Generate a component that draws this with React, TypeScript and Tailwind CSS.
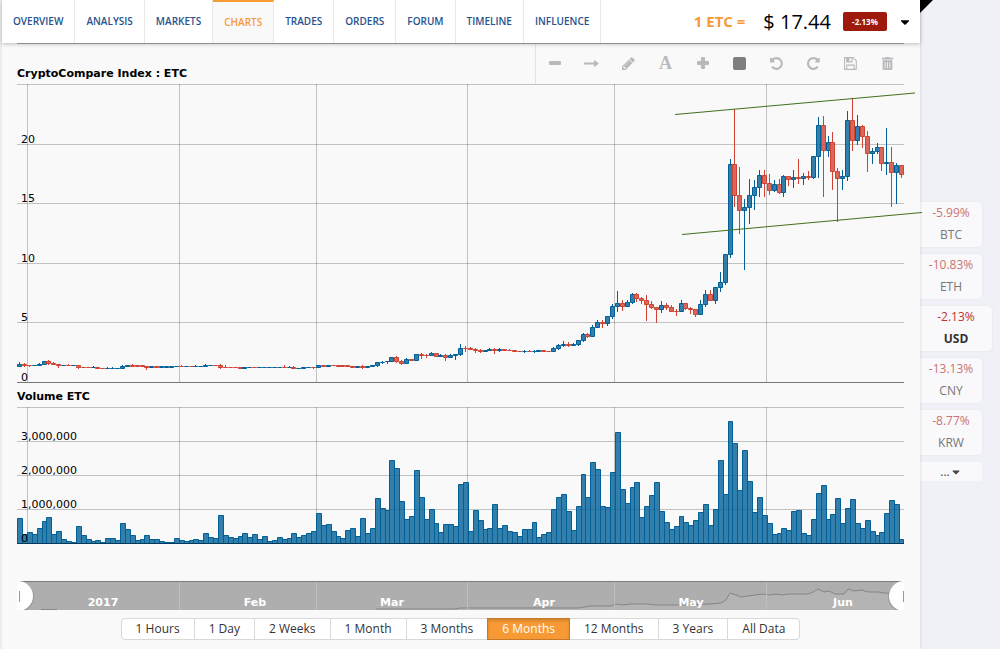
import { ReactNode } from "react";
import { FaCaretDown, FaTrashAlt } from "react-icons/fa";
import clsx from "clsx";

const tabs = [
  "Overview",
  "Analysis",
  "Markets",
  "Charts",
  "Trades",
  "Orders",
  "Forum",
  "Timeline",
  "Influence",
];

const ranges = [
  "1 Hours",
  "1 Day",
  "2 Weeks",
  "1 Month",
  "3 Months",
  "6 Months",
  "12 Months",
  "3 Years",
  "All Data",
];

const currencies = [
  { code: "BTC", change: "-5.99%" },
  { code: "ETH", change: "-10.83%" },
  { code: "USD", change: "-2.13%" },
  { code: "CNY", change: "-13.13%" },
  { code: "KRW", change: "-8.77%" },
];

const months = [
  { label: "2017", x: 27, center: 103 },
  { label: "Feb", x: 179, center: 255 },
  { label: "Mar", x: 316, center: 392 },
  { label: "Apr", x: 467, center: 544 },
  { label: "May", x: 614, center: 691 },
  { label: "Jun", x: 766, center: 843 },
];

// one value per day, 102 = 1,000,000 ETC
const volumes = [
  75, 27, 33, 27, 45, 66, 78, 27, 36, 12, 6, 3, 51, 24, 12, 6, 9, 3, 15, 15, 9,
  60, 42, 24, 9, 12, 24, 12, 12, 6, 3, 3, 15, 9, 6, 9, 12, 9, 30, 18, 15, 84,
  24, 18, 15, 21, 30, 18, 27, 12, 21, 6, 9, 18, 12, 15, 30, 18, 24, 30, 36, 90,
  54, 57, 36, 21, 15, 39, 45, 21, 75, 30, 45, 135, 105, 99, 249, 225, 126, 72,
  81, 219, 138, 72, 102, 60, 33, 57, 57, 51, 177, 183, 36, 99, 69, 42, 45, 117,
  45, 54, 36, 33, 21, 42, 42, 63, 18, 27, 33, 102, 138, 147, 96, 39, 111, 207,
  138, 243, 222, 111, 108, 213, 333, 162, 120, 168, 183, 78, 111, 144, 183, 96,
  63, 42, 51, 81, 63, 54, 69, 93, 117, 54, 102, 249, 147, 366, 300, 159, 279,
  186, 93, 138, 84, 60, 27, 30, 45, 39, 96, 99, 30, 24, 72, 150, 174, 72, 87,
  135, 60, 105, 132, 60, 45, 69, 36, 24, 33, 90, 129, 117, 12,
];

// direction, high, body top, body bottom, low
const candles = `
u 362 364 366 366|d 363 364 365 366|d 365 365 365 366|u 365 365 365 365|u 363 364 365 365
u 361 361 364 364|d 360 361 363 364|d 362 363 364 364|d 364 364 365 367|u 365 365 365 365
d 364 365 365 365|u 365 365 365 365|d 365 365 367 368|d 367 367 367 367|d 367 367 367 367
u 366 367 367 367|d 367 367 368 368|d 368 368 368 368|u 367 368 368 368|u 367 368 368 368
u 368 368 368 368|u 365 366 368 368|u 365 365 366 366|d 364 365 366 366|d 365 365 366 366
d 365 365 366 366|d 366 366 367 369|u 366 366 367 367|d 366 366 367 367|u 366 366 367 367
u 366 366 367 367|u 366 366 367 367|u 366 366 366 366|d 365 366 366 366|u 366 366 366 366
d 366 366 366 366|u 365 366 366 366|u 366 366 366 366|u 364 365 366 366|u 365 365 365 365
d 365 365 365 365|d 364 365 367 368|d 365 367 367 367|d 367 367 367 367|d 367 367 367 367
d 367 367 368 368|u 367 367 368 368|u 367 367 367 367|d 367 367 367 367|u 367 367 367 367
u 367 367 367 367|u 367 367 367 367|u 367 367 367 367|u 367 367 367 367|d 365 367 367 367
u 366 367 367 367|d 366 367 368 368|u 368 368 368 368|u 367 367 368 368|u 367 367 367 367
d 367 367 367 368|u 365 365 367 367|d 365 365 366 366|u 365 365 366 366|d 365 365 365 365
d 365 365 366 366|d 365 365 366 366|d 365 365 366 366|d 366 366 367 367|u 366 366 367 367
d 365 366 367 368|u 366 366 367 367|u 365 365 366 366|u 362 362 365 366|u 361 362 362 363
u 361 361 361 363|u 357 357 361 361|d 356 357 361 362|d 360 361 363 364|u 358 359 363 363
d 359 359 360 360|u 354 354 360 360|d 353 354 355 358|d 354 355 355 357|u 352 353 355 355
d 353 353 356 356|u 354 355 356 356|d 354 355 357 360|u 354 355 357 357|u 354 354 355 359
u 344 348 354 355|d 346 348 348 351|d 347 348 349 349|d 348 349 350 352|d 349 350 351 352
u 350 350 351 351|u 348 349 350 350|d 348 349 350 353|u 348 349 350 351|d 349 349 350 350
d 349 350 350 350|d 350 350 351 351|d 351 351 351 351|u 350 351 351 352|d 350 351 351 351
u 350 351 351 352|u 350 350 351 351|d 350 350 351 351|d 351 351 351 351|u 347 348 351 351
u 344 345 348 349|u 341 344 345 346|d 342 344 345 346|u 343 344 345 345|u 340 340 344 345
u 333 334 340 341|d 333 334 336 337|u 325 327 336 336|u 320 322 327 327|d 320 322 323 327
u 316 316 323 325|u 304 306 316 318|u 291 303 306 311|d 300 303 306 310|u 300 302 306 306
u 293 294 302 303|d 293 294 298 301|d 297 298 300 303|d 295 300 304 320|d 301 304 307 308
d 307 307 309 322|u 301 305 309 312|d 303 305 307 309|d 305 307 311 311|d 309 311 311 315
u 300 303 311 311|d 303 303 308 309|d 307 308 309 313|d 309 309 314 316|u 300 304 314 314
u 290 294 304 306|d 290 294 300 300|u 287 287 300 303|u 272 282 287 291|u 254 254 282 284
u 159 164 254 257|d 109 164 195 206|d 167 195 210 233|u 199 207 210 269|u 179 195 207 223
u 180 187 195 209|u 170 175 187 196|d 170 175 183 196|d 174 183 190 194|u 180 184 190 191
d 179 184 192 193|u 175 176 192 196|d 176 176 179 185|u 170 177 179 187|d 159 177 178 183
u 173 176 178 184|d 171 176 177 179|u 156 156 177 178|u 117 125 156 177|d 116 125 150 196
u 136 142 150 156|d 132 142 171 189|d 168 171 178 221|u 170 176 178 189|u 111 120 176 180
d 98 120 140 150|u 115 126 140 144|d 125 126 136 147|d 131 136 153 171|u 148 151 153 163
u 143 147 151 153|d 147 147 163 170|u 128 162 163 174|d 147 162 172 206|u 163 165 172 203
d 165 165 174 177`
  .trim()
  .split(/[\n|]/)
  .map((row) => {
    const [dir, ...values] = row.split(" ");
    const [high, top, bottom, low] = values.map(Number);
    return { up: dir === "u", high, top, bottom, low };
  });

const dayX = (day: number) => Math.round(17 + day * 4.9) + 0.5;

function MonthLines({ top, bottom }: { top: number; bottom: number }) {
  return (
    <>
      {months.map((m) => (
        <line
          key={m.label}
          x1={m.x + 0.5}
          x2={m.x + 0.5}
          y1={top}
          y2={bottom}
          stroke="#000"
          strokeOpacity={0.22}
        />
      ))}
    </>
  );
}

function AxisLabel({ y, children }: { y: number; children: ReactNode }) {
  return (
    <text x={21} y={y} className="fill-black font-['DejaVu_Sans'] text-[11px]">
      {children}
    </text>
  );
}

function PriceChart() {
  return (
    <svg
      viewBox="2 84 918 299"
      className="relative z-20 block w-full overflow-visible"
      role="img"
      aria-label="ETC price"
    >
      {[84, 144, 203, 263, 322].map((y) => (
        <line
          key={y}
          x1={17}
          x2={904}
          y1={y + 0.5}
          y2={y + 0.5}
          stroke="#000"
          strokeOpacity={0.22}
        />
      ))}
      <MonthLines top={84} bottom={382} />
      <line x1={17} x2={904} y1={382.5} y2={382.5} stroke="#777" />
      {candles.map((c, i) => {
        const x = dayX(i);
        const color = c.up ? "#006097" : "#d14233";
        return (
          <g key={i} stroke={color}>
            <path d={`M${x + 2} ${c.high}V${c.top}M${x + 2} ${c.bottom}V${c.low + 1}`} />
            <path
              d={`M${x} ${c.top + 0.5}h4V${c.bottom + 0.5}h-4z`}
              fill={color}
              fillOpacity={0.8}
            />
          </g>
        );
      })}
      <path d="M675 114.5L915 93M682 234.5L922 212.5" stroke="#42701c" />
      <AxisLabel y={143}>20</AxisLabel>
      <AxisLabel y={202}>15</AxisLabel>
      <AxisLabel y={262}>10</AxisLabel>
      <AxisLabel y={321}>5</AxisLabel>
      <AxisLabel y={381}>0</AxisLabel>
    </svg>
  );
}

function VolumeChart() {
  return (
    <svg
      viewBox="2 407 918 137"
      className="block w-full"
      role="img"
      aria-label="ETC volume"
    >
      {[407, 441, 475, 509].map((y) => (
        <line
          key={y}
          x1={17}
          x2={904}
          y1={y + 0.5}
          y2={y + 0.5}
          stroke="#000"
          strokeOpacity={0.22}
        />
      ))}
      <MonthLines top={407} bottom={543} />
      {volumes.map((v, i) => {
        const x = dayX(i);
        return (
          <path
            key={i}
            d={`M${x} 543.5V${543.5 - Math.round((v + 1) / 3)}H${Math.min(dayX(i + 1), 903.5)}V543.5`}
            fill="#006097"
            fillOpacity={0.8}
            stroke="#006097"
          />
        );
      })}
      <line x1={17} x2={904} y1={543.5} y2={543.5} stroke="#003a5c" />
      <AxisLabel y={440}>3,000,000</AxisLabel>
      <AxisLabel y={474}>2,000,000</AxisLabel>
      <AxisLabel y={508}>1,000,000</AxisLabel>
      <AxisLabel y={542}>0</AxisLabel>
    </svg>
  );
}

const history =
  "376,609 455,609 460,608 500,608 578,608 590,606 610,606 617,604 623,605 630,604 648,604 655,605 680,605 710,604 721,603 726,600 730,593 736,595 741,597 748,596 755,595 763,594 770,595 776,594 782,595 788,594 808,594 813,592 818,589 824,592 829,591 835,594 844,594 848,589 854,591 862,590 868,592 878,592 884,593 904,594";

function RangeScrollbar() {
  return (
    <svg
      viewBox="2 581 918 29"
      className="mt-[37px] block w-full"
      role="img"
      aria-label="Visible range"
    >
      <defs>
        <clipPath id="strip">
          <rect x={17} y={581} width={887} height={29} />
        </clipPath>
      </defs>
      <g clipPath="url(#strip)">
        <rect x={17} y={581} width={887} height={29} fill="#aeaeae" />
        <polygon points={`${history} 904,610 376,610`} fill="#b4b4b4" />
        <polyline points={history} fill="none" stroke="#858585" />
        <path d="M41 609.5h16" stroke="#858585" />
        <path d="M17 581.5h887" stroke="#7b7b7b" />
        {months.slice(1).map((m) => (
          <path key={m.label} d={`M${m.x + 0.5} 582v28`} stroke="#bdbdbd" />
        ))}
        {months.map((m) => (
          <text
            key={m.label}
            x={m.center}
            y={606}
            textAnchor="middle"
            className="fill-white font-['DejaVu_Sans'] text-[11px] font-bold"
          >
            {m.label}
          </text>
        ))}
        <circle cx={19} cy={597} r={15} fill="#888" fillOpacity={0.5} />
        <circle cx={903} cy={597} r={15} fill="#888" fillOpacity={0.5} />
        <circle cx={18} cy={596} r={15} fill="#fff" />
        <circle cx={904} cy={596} r={15} fill="#fff" />
        <path d="M19.5 591v11M903.5 591v11" stroke="#999" />
      </g>
    </svg>
  );
}

function Glyph({ d, flip = false }: { d: string; flip?: boolean }) {
  return (
    <svg
      viewBox="0 0 1536 1792"
      className={clsx("h-[15px]", flip && "-scale-x-100")}
      fill="currentColor"
      aria-hidden
    >
      <path d={d} />
    </svg>
  );
}

const undoPath =
  "M1536 896q0 156-61 298t-164 245-245 164-298 61q-172 0-327-72.5t-264-204.5q-7-10-6.5-22.5t8.5-20.5l137-138q10-9 25-9 16 2 23 12 73 95 179 147t225 52q104 0 198.5-40.5t163.5-109.5 109.5-163.5 40.5-198.5-40.5-198.5-109.5-163.5-163.5-109.5-198.5-40.5q-98 0-188 35.5t-160 101.5l137 138q31 30 14 69-17 40-59 40h-448q-26 0-45-19t-19-45v-448q0-42 40-59 39-17 69 14l130 129q107-101 244.5-156.5t284.5-55.5q156 0 298 61t245 164 164 245 61 298z";
const pencilPath =
  "M363 1536l91-91-235-235-91 91v107h128v128h107zm523-928q0-22-22-22-10 0-17 7l-542 542q-7 7-7 17 0 22 22 22 10 0 17-7l542-542q7-7 7-17zm-54-192l416 416-832 832h-416v-416zm683 96q0 53-37 90l-166 166-416-416 166-165q36-38 90-38 53 0 91 38l235 234q37 39 37 91z";
const savePath =
  "M384 1536h768v-384h-768v384zm896 0h128v-896q0-14-10-38.5t-20-34.5l-281-281q-10-10-34-20t-39-10v416q0 40-28 68t-68 28h-576q-40 0-68-28t-28-68v-416h-128v1280h128v-416q0-40 28-68t68-28h832q40 0 68 28t28 68v416zm-384-928v-320q0-13-9.5-22.5t-22.5-9.5h-192q-13 0-22.5 9.5t-9.5 22.5v320q0 13 9.5 22.5t22.5 9.5h192q13 0 22.5-9.5t9.5-22.5zm640 32v928q0 40-28 68t-68 28h-1344q-40 0-68-28t-28-68v-1344q0-40 28-68t68-28h928q40 0 88 20t76 48l280 280q28 28 48 76t20 88z";

const tools: { label: string; icon: ReactNode }[] = [
  {
    label: "Line",
    icon: <span className="h-1 w-3 rounded-[1px] bg-current" />,
  },
  {
    label: "Arrow",
    icon: (
      <svg viewBox="0 0 15 7" className="w-[15px]" aria-hidden>
        <path d="M0 2.5h10V.5q0-.6.6-.3l4 3q.3.3 0 .6l-4 3q-.6.3-.6-.3v-2H0z" fill="currentColor" />
      </svg>
    ),
  },
  { label: "Pencil", icon: <Glyph d={pencilPath} /> },
  {
    label: "Text",
    icon: (
      <span className="font-['Liberation_Serif',serif] text-lg leading-4 font-bold">
        A
      </span>
    ),
  },
  {
    label: "Add",
    icon: (
      <svg viewBox="0 0 12 12" className="w-3" fill="currentColor" aria-hidden>
        <rect x={4} width={4} height={12} rx={1} />
        <rect y={4} width={12} height={4} rx={1} />
      </svg>
    ),
  },
  {
    label: "Color",
    icon: <span className="size-[13px] rounded-xs bg-[#7f7f7f]" />,
  },
  { label: "Undo", icon: <Glyph d={undoPath} /> },
  { label: "Redo", icon: <Glyph d={undoPath} flip /> },
  { label: "Save", icon: <Glyph d={savePath} /> },
  { label: "Delete", icon: <FaTrashAlt size={13} /> },
];

function Header() {
  return (
    <header className="relative z-10 flex h-[43px] justify-between bg-white shadow-[0_1px_4px_rgba(0,0,0,0.25)]">
      <nav className="flex">
        {tabs.map((tab) => (
          <a
            key={tab}
            href="#"
            className={clsx(
              "flex items-center border-r border-[#e8e8e8] px-[11px] text-[10px] font-semibold uppercase",
              tab === "Charts"
                ? "border-t-2 border-t-[#f79a35] bg-[#f9f9f9] text-[#f79a35]"
                : "text-[#27528f]",
            )}
          >
            {tab}
          </a>
        ))}
      </nav>
      <div className="flex items-center pr-2">
        <span className="mr-[18px] text-[15px] font-bold text-[#f79a35]">
          1 ETC =
        </span>
        <span className="mr-3 text-xl leading-6 text-black">$ 17.44</span>
        <span className="flex h-[19px] w-11 items-center justify-center rounded-xs bg-[#9e1b0b] text-[8px] font-bold text-white">
          -2.13%
        </span>
        <button aria-label="More prices" className="ml-[11px] text-black">
          <FaCaretDown size={14} />
        </button>
      </div>
    </header>
  );
}

function CurrencyRail() {
  return (
    <aside className="relative w-20 shrink-0">
      <svg viewBox="0 0 13 13" className="h-[13px] w-[13px]" aria-hidden>
        <path d="M0 0h13L0 13z" />
      </svg>
      <div className="mt-[189px] flex flex-col items-start gap-[7px]">
        {currencies.map(({ code, change }) => {
          const active = code === "USD";
          return (
            <a
              key={code}
              href="#"
              className={clsx(
                "flex h-[45px] flex-col items-center rounded-r-sm bg-[#f9f9fb] text-xs leading-[22px] shadow-[0_0_2px_rgba(0,0,0,0.08)]",
                active ? "w-[72px]" : "w-[62px]",
              )}
            >
              <span className={active ? "text-[#c0332b]" : "text-[#c97470]"}>
                {change}
              </span>
              <span
                className={active ? "font-bold text-[#333]" : "text-[#777]"}
              >
                {code}
              </span>
            </a>
          );
        })}
        <button className="flex h-[19px] w-[62px] items-center justify-center rounded-r-sm bg-[#f9f9fb] text-xs text-[#444]">
          ...
          <FaCaretDown size={12} />
        </button>
      </div>
    </aside>
  );
}

export default function App() {
  return (
    <div className="flex min-h-screen bg-[#f0f0f7] font-['Open_Sans',sans-serif]">
      <main className="relative z-10 min-w-0 flex-1 border-l-2 border-[#ececec] bg-[#f9f9f9] shadow-[1px_0_2px_rgba(0,0,0,0.08)]">
        <Header />
        <div className="mr-4 ml-[15px] flex h-[41px] items-end justify-between border-t border-[#aaa]">
          <h2 className="pb-0.5 font-['DejaVu_Sans'] text-[11px] leading-4 font-bold text-black">
            CryptoCompare Index : ETC
          </h2>
          <div className="-mr-0.5 flex h-10 items-center border-l border-[#e2e2e2] pb-0.5 text-[#b9b9bd]">
            {tools.map((tool) => (
              <button
                key={tool.label}
                aria-label={tool.label}
                className="flex w-[37px] justify-center"
              >
                {tool.icon}
              </button>
            ))}
          </div>
        </div>
        <PriceChart />
        <h2 className="ml-[15px] h-6 pt-1.5 font-['DejaVu_Sans'] text-[11px] leading-4 font-bold text-black">
          Volume ETC
        </h2>
        <VolumeChart />
        <RangeScrollbar />
        <div className="mt-2 mb-2 flex justify-center">
          {ranges.map((range) => (
            <button
              key={range}
              className={clsx(
                "-ml-px h-[22px] border px-[14px] text-xs first:rounded-l-sm last:rounded-r-sm",
                range === "6 Months"
                  ? "relative border-[#c67a28] bg-[#f79a35] text-white shadow-[inset_0_2px_3px_rgba(0,0,0,0.15)]"
                  : "border-[#d9d9d9] bg-white text-[#333]",
              )}
            >
              {range}
            </button>
          ))}
        </div>
      </main>
      <CurrencyRail />
    </div>
  );
}
